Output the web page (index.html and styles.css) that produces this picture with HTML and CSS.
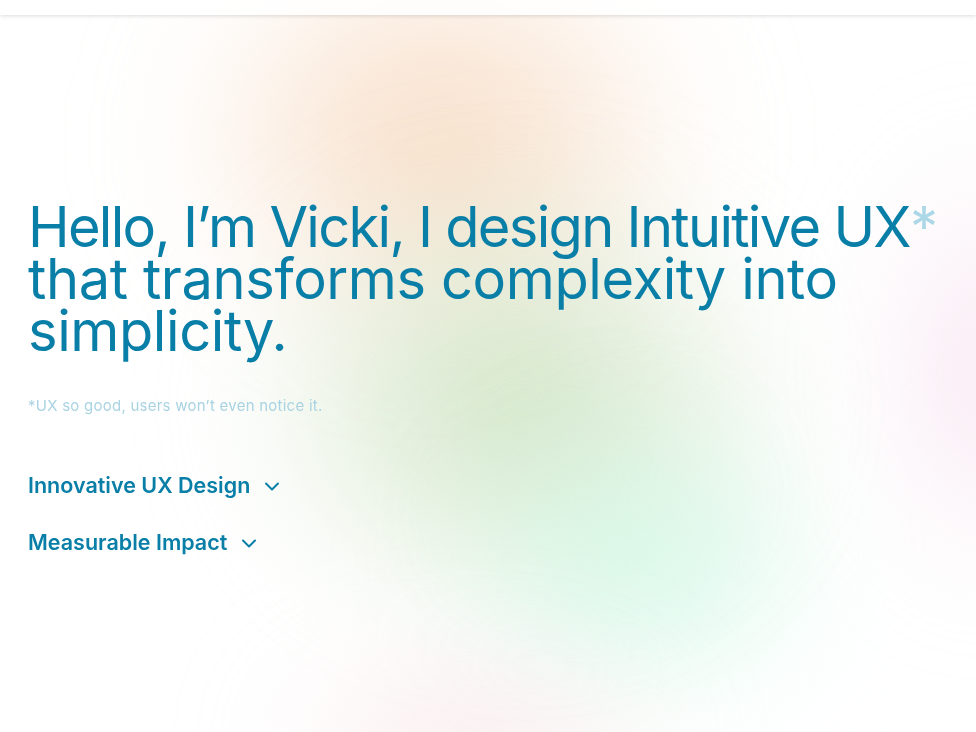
FILE: index.html
```html
<!DOCTYPE html>
<html lang="en">
<head>
<meta charset="utf-8">
<title>Vicki — UX Design</title>
<link rel="stylesheet" href="styles.css">
</head>
<body>
<div class="bg" aria-hidden="true">
  <div class="blob blob-peach"></div>
  <div class="blob blob-green"></div>
  <div class="blob blob-mint"></div>
  <div class="blob blob-pink"></div>
  <div class="blob blob-rose"></div>
</div>
<header class="topbar"></header>
<main class="hero">
  <h1 class="headline"><span class="line line-tight">Hello, I’m Vicki, I design Intuitive UX<span class="star">*</span></span><span class="line">that transforms complexity into</span><span class="line">simplicity.</span></h1>
  <p class="footnote">*UX so good, users won’t even notice it.</p>
  <ul class="accordion">
    <li class="acc-item"><span>Innovative UX Design</span>
      <svg class="chev" viewBox="0 0 16 16" width="16" height="16"><path d="M2 5.5 L8 11.5 L14 5.5" fill="none" stroke="currentColor" stroke-width="2" stroke-linecap="round" stroke-linejoin="round"/></svg>
    </li>
    <li class="acc-item"><span>Measurable Impact</span>
      <svg class="chev" viewBox="0 0 16 16" width="16" height="16"><path d="M2 5.5 L8 11.5 L14 5.5" fill="none" stroke="currentColor" stroke-width="2" stroke-linecap="round" stroke-linejoin="round"/></svg>
    </li>
  </ul>
</main>
</body>
</html>
```
FILE: styles.css
```css
html, body {
  margin: 0;
  padding: 0;
  height: 100%;
}
body {
  background: #ffffff;
  font-family: Inter, "Liberation Sans", sans-serif;
  color: #097fa8;
  overflow: hidden;
}
.bg {
  position: fixed;
  inset: 0;
  z-index: 0;
  overflow: hidden;
}
.blob {
  position: absolute;
  border-radius: 50%;
  filter: blur(60px);
}
.blob-peach {
  left: 160px; top: -90px; width: 560px; height: 460px;
  background: radial-gradient(closest-side, rgba(246,214,186,0.9), rgba(246,214,186,0) 100%);
}
.blob-green {
  left: 230px; top: 170px; width: 580px; height: 470px;
  background: radial-gradient(closest-side, rgba(205,226,192,1), rgba(205,226,192,0) 100%);
}
.blob-mint {
  left: 430px; top: 400px; width: 420px; height: 320px;
  background: radial-gradient(closest-side, rgba(205,248,228,0.95), rgba(205,248,228,0) 100%);
}
.blob-pink {
  left: 880px; top: 150px; width: 220px; height: 440px;
  background: radial-gradient(closest-side, rgba(244,220,236,0.9), rgba(244,220,236,0) 100%);
}
.blob-rose {
  left: 260px; top: 660px; width: 420px; height: 160px;
  background: radial-gradient(closest-side, rgba(246,220,222,0.9), rgba(246,220,222,0) 100%);
}
.topbar {
  position: relative;
  z-index: 2;
  height: 15px;
  background: rgba(255,255,255,0.85);
  box-shadow: 0 1px 4px rgba(0,0,0,0.14);
}
.hero {
  position: relative;
  z-index: 1;
  padding: 186px 28px 0 28px;
}
.headline {
  margin: 0;
  font-weight: 400;
  font-size: 56px;
  line-height: 52px;
  letter-spacing: -0.4px;
}
.line {
  display: block;
  white-space: nowrap;
}
.line-tight {
  letter-spacing: -1.7px;
}
.star {
  color: #acd7e6;
  letter-spacing: 0;
}
.footnote {
  margin: 39px 0 0 0;
  font-size: 15px;
  letter-spacing: 0.25px;
  color: #a9d3e2;
}
.accordion {
  list-style: none;
  margin: 57px 0 0 0;
  padding: 0;
  display: flex;
  flex-direction: column;
  gap: 30px;
}
.acc-item {
  display: flex;
  align-items: center;
  gap: 14px;
  font-size: 21.5px;
  font-weight: 600;
  line-height: 27px;
}
.chev {
  width: 16px;
  height: 16px;
}
```
